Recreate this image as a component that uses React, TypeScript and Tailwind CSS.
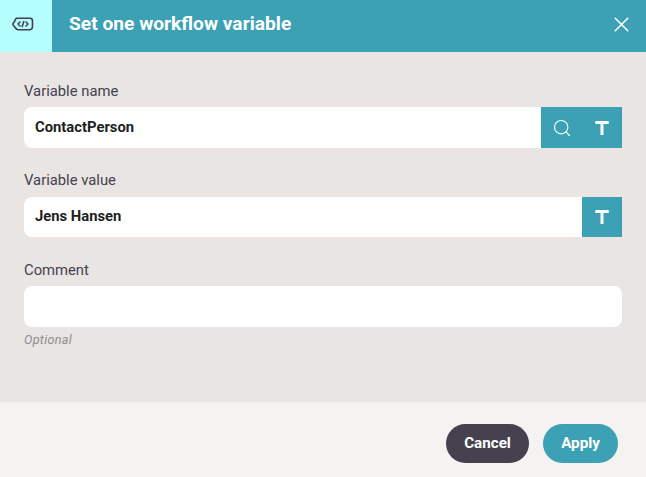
import React from "react";
import { Search, X } from "lucide-react";

const font = "font-['Roboto',sans-serif]";

const TypeButton = () => (
  <button className="w-10 h-full flex items-center justify-center bg-[#3da1b5] text-white">
    <svg width="16" height="16" viewBox="0 0 16 16" fill="none">
      <path d="M1.25 1H14.75V3.9H9.5V15H6.5V3.9H1.25Z" fill="currentColor" />
    </svg>
  </button>
);

const Field = ({
  label,
  value,
  search,
  type,
}: {
  label: string;
  value?: string;
  search?: boolean;
  type?: boolean;
}) => (
  <div>
    <label className="block h-[22px] text-[14.8px] leading-[20px] text-[#45414f]">{label}</label>
    <div className={`mt-[4.5px] h-[40.5px] flex overflow-hidden bg-white ${type ? "rounded-l-lg" : "rounded-lg"}`}>
      <div className="flex-1 px-[11px] pb-px flex items-center text-[14.8px] font-bold text-[#1e1e1e]">{value}</div>
      {search && (
        <button className="w-[41px] h-full flex items-center justify-center bg-[#3da1b5] text-white">
          <Search size={20} strokeWidth={1.4} />
        </button>
      )}
      {type && <TypeButton />}
    </div>
  </div>
);

export default function App() {
  return (
    <div className={`${font} w-[646px] h-[477px] flex flex-col bg-[#e9e5e2]`}>
      <header className="h-[52px] flex items-center bg-[#3da1b5] text-white">
        <div className="w-[52px] h-full pb-1 pr-[6px] flex items-center justify-center bg-[#b5feff] text-[#45414f]">
          <svg width="22" height="14" viewBox="0 0 22 14" fill="none" stroke="currentColor" strokeWidth="1.6" strokeLinecap="round" strokeLinejoin="round">
            <path d="M4.5 1H18a2.5 2.5 0 0 1 2.5 2.5v6A3 3 0 0 1 17.5 12.5H6a2 2 0 0 1-1.4-.6L1.6 8.6a2.2 2.2 0 0 1 0-3L3 3.5A3 3 0 0 1 4.5 1Z" transform="translate(0 0.2)" />
            <path d="M8 5L6 7l2 2M14 5l2 2-2 2M11.8 4.6l-1.6 4.8" />
          </svg>
        </div>
        <h1 className="ml-[17px] flex-1 pb-1 text-[19.2px] font-bold">Set one workflow variable</h1>
        <button className="mr-[12px] pb-1 text-white">
          <X size={25} strokeWidth={1.5} />
        </button>
      </header>

      <main className="flex-1 px-6 pt-[28.75px] flex flex-col gap-[22.5px]">
        <Field label="Variable name" value="ContactPerson" search type />
        <Field label="Variable value" value="Jens Hansen" type />
        <div>
          <Field label="Comment" />
          <p className="mt-1 text-[12.6px] italic tracking-[0.3px] text-[#8f8b8f]">Optional</p>
        </div>
      </main>

      <footer className="h-[75px] flex items-start justify-end gap-[14px] pt-[22px] pr-7 bg-[#f4f3f1]">
        <button className="h-[39px] w-[83px] rounded-full bg-[#45414f] text-white text-[15.2px] font-bold">Cancel</button>
        <button className="h-[39px] w-[75px] rounded-full bg-[#3da1b5] text-white text-[15.2px] font-bold">Apply</button>
      </footer>
    </div>
  );
}
